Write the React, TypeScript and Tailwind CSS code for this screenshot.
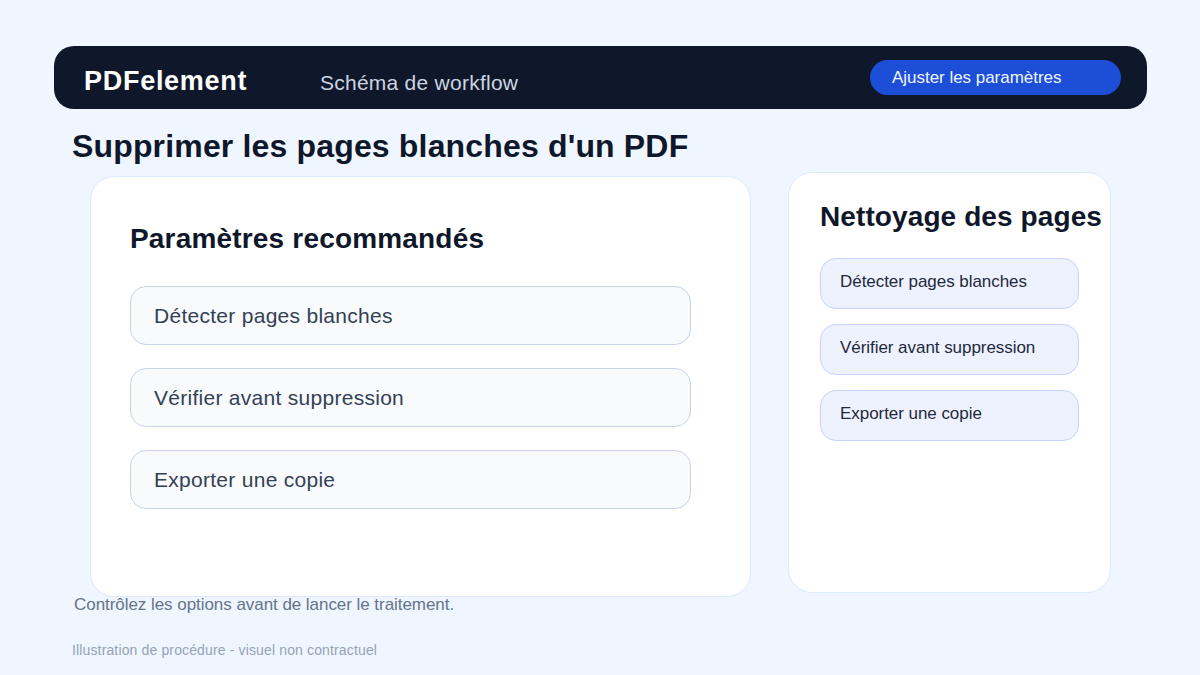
const font = "font-['Liberation_Sans',Arial,sans-serif]";

const steps = ['Détecter pages blanches', 'Vérifier avant suppression', 'Exporter une copie'];

export default function App() {
  return (
    <div className={`${font} w-[1200px] h-[675px] overflow-hidden bg-[#eff6ff] pt-[46px]`}>
      <header className="ml-[54px] w-[1093px] h-[63px] rounded-[20px] bg-[#0f172a] flex items-start pl-[30px]">
        <div className="w-[236px] mt-[17px] text-[27px] leading-[36px] font-bold text-white tracking-[0.72px]">PDFelement</div>
        <div className="mt-[23px] text-[21px] leading-[28px] text-[#cbd5e1] tracking-[0.25px]">Schéma de workflow</div>
        <button className="ml-auto mr-[26px] mt-[14px] w-[251px] h-[35px] rounded-full bg-[#1d4ed8] text-left pl-[22px] text-[17px] text-[#eff6ff] tracking-[-0.03px]">
          Ajuster les paramètres
        </button>
      </header>

      <h1 className="ml-[72px] mt-[18px] text-[32px] leading-[38px] font-bold text-[#0f172a] tracking-[0.16px]">
        Supprimer les pages blanches d'un PDF
      </h1>

      <div className="ml-[90px] mt-[7px] flex items-start gap-[37px]">
        <section className="mt-[4px] w-[661px] h-[421px] rounded-[24px] bg-white border border-[#dbeafe] pt-[44px] pl-[39px]">
          <h2 className="text-[28px] leading-[36px] font-bold text-[#0f172a] tracking-[0.18px]">Paramètres recommandés</h2>
          <div className="mt-[29px] flex flex-col gap-[23px]">
            {steps.map(s => (
              <div key={s} className="w-[561px] h-[59px] rounded-[16px] bg-[#f8fafc] border border-[#c8d4e6] pl-[23px] flex items-center text-[21px] text-[#334155] tracking-[0.28px]">
                {s}
              </div>
            ))}
          </div>
        </section>

        <aside className="w-[323px] h-[421px] rounded-[24px] bg-white border border-[#dbeafe] pt-[26px] pl-[31px]">
          <h2 className="text-[28px] leading-[36px] font-bold text-[#0f172a] whitespace-nowrap tracking-[0.1px]">Nettoyage des pages</h2>
          <div className="mt-[23px] flex flex-col gap-[15px]">
            {steps.map(s => (
              <div key={s} className="w-[259px] h-[51px] rounded-[16px] bg-[#eef2ff] border border-[#c7d2fe] pl-[19px] pb-[4px] flex items-center text-[17px] text-[#1e293b] tracking-[-0.05px]">
                {s}
              </div>
            ))}
          </div>
        </aside>
      </div>

      <p className="ml-[74px] -mt-[3px] text-[17px] leading-[22px] text-[#64748b] tracking-[-0.05px]">Contrôlez les options avant de lancer le traitement.</p>
      <p className="ml-[72px] mt-[24px] text-[14px] leading-[20px] text-[#94a3b8] tracking-[0.14px]">Illustration de procédure - visuel non contractuel</p>
    </div>
  );
}
